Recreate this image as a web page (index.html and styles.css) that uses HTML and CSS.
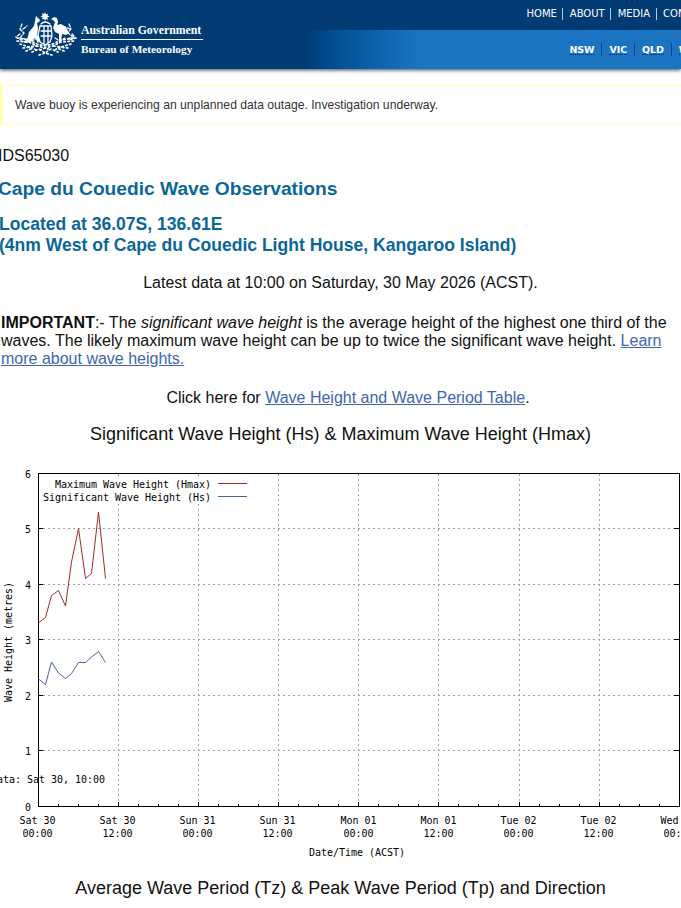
FILE: index.html
```html
<!DOCTYPE html>
<html lang="en">
<head>
<meta charset="utf-8">
<title>Cape du Couedic Wave Observations</title>
<link rel="stylesheet" href="styles.css">
</head>
<body>
<header class="masthead">
  <a class="brand">
    <svg class="crest" width="62" height="46" viewBox="0 0 62 46" fill="#fff" stroke="#fff" stroke-linecap="round">
      <path stroke="none" d="M30 0l1 2.200 2.300-.8-1 2.200 2.200 1-2.200 1 .8 2.200-2.200-.8L30 9l-1-2.200-2.300.8 1-2.200-2.200-1 2.200-1-.9-2.200 2.200.8z"/>
      <path stroke="none" d="M21 4l2 2 2 2-1 2-2 1 1 5-1 7 3 5-2 3-3-5-5 4-4 1-4-1 5-2 2-8 5-6 1-5z"/>
      <path stroke="none" d="M39 5l3 1 1 4-1 3 4-1 5 3 3 6-3 2-4-1-1 8-2-1v-7l-4-2-2-4 2-6-2-2-2-1z"/>
      <path fill="none" stroke-width="1.300" d="M25 14h11l1 10-2 6-5 3-5-3-2-7 2-9zM26 19h10M26 24h10M29 14v18M33 14v18M26 12q4-4 9 0"/>
      <path fill="none" stroke-width="1.300" stroke-dasharray="3 1.800" d="M7 12l-2 5 4 4-4 5 6 1M8 17l4-3M5 22l-4 3 5 3M54 12l2 5-3 4 5 4-6 2M55 17l-5-2M57 22l4 4-7 2M12 27l5 2 5-3M40 26l5 3 5-3"/>
      <path fill="none" stroke-width="1.700" stroke-dasharray="1.500 2.600" d="M2 26l12 2 8 4 8 2 8-2 8-4 13-2M2 29l12 1 8 4 8 2 8-2 8-4 13-1M5 32l9 3 8-1M56 32l-10 3-8-1M8 36l8-1 5 3M53 36l-9-1-4 3M17 40l7-3 6 4 6-4 7 3M24 43l6-2 7 2M11 39l7-3M49 39l-7-3M25 38l5-2 6 2"/>
    </svg>
    <span class="brand-text"><span class="gov">Australian Government</span><span class="bom">Bureau of Meteorology</span></span>
  </a>
  <div class="bars">
    <nav class="topnav"><a>HOME</a><a>ABOUT</a><a>MEDIA</a><a>CONTACTS</a></nav>
    <nav class="states"><a><abbr>NSW</abbr></a><a><abbr>VIC</abbr></a><a><abbr>QLD</abbr></a><a><abbr>WA</abbr></a></nav>
  </div>
</header>
<div class="alert">Wave buoy is experiencing an unplanned data outage. Investigation underway.</div>
<main>
  <p class="product">IDS65030</p>
  <h1>Cape du Couedic Wave Observations</h1>
  <h2>Located at 36.07S, 136.61E<br>(4nm West of Cape du Couedic Light House, Kangaroo Island)</h2>
  <p class="latest">Latest data at 10:00 on Saturday, 30 May 2026 (ACST).</p>
  <p class="important"><b>IMPORTANT</b>:- The <i>significant wave height</i> is the average height of the highest one third of the<br>waves. The likely maximum wave height can be up to twice the significant wave height. <a>Learn<br>more about wave heights.</a></p>
  <p class="table-link">Click here for <a>Wave Height and Wave Period Table</a>.</p>
  <h3>Significant Wave Height (Hs) &amp; Maximum Wave Height (Hmax)</h3>
  <svg class="chart" width="681" height="408" viewBox="0 460 681 408">
    <path class="grid" d="M118.500 806V474M198.500 806V474M278.500 806V474M358.500 806V474M438.500 806V474M519.500 806V474M599.500 806V474M38 750.500H679M38 695.500H679M38 639.500H679M38 584.500H679M38 528.500H679"/>
    <path class="key-bg" d="M42 477h207v25H42z"/>
    <path class="axis" d="M38.500 473.500H679.500V806.500H38.500zM38 750.500h5M38 695.500h5M38 639.500h5M38 584.500h5M38 528.500h5M679 750.500h-5M679 695.500h-5M679 639.500h-5M679 584.500h-5M679 528.500h-5M118.500 806v-4M198.500 806v-4M278.500 806v-4M358.500 806v-4M438.500 806v-4M519.500 806v-4M599.500 806v-4"/>
    <path class="axis" d="M58.500 806v-2M78.500 806v-2M98.500 806v-2M138.500 806v-2M158.500 806v-2M178.500 806v-2M218.500 806v-2M238.500 806v-2M258.500 806v-2M298.500 806v-2M318.500 806v-2M338.500 806v-2M378.500 806v-2M398.500 806v-2M418.500 806v-2M458.500 806v-2M478.500 806v-2M498.500 806v-2M539.500 806v-2M559.500 806v-2M579.500 806v-2M619.500 806v-2M639.500 806v-2M659.500 806v-2"/>
    <path class="hmax" d="M218 483.500H247M38.500 623L45.500 617.500 51.500 595.500 58.500 590.500 65.500 606 71.500 562 78.500 528.500 85.500 578.500 91.500 573.500 98.500 512 105.500 578.500"/>
    <path class="hs" d="M218 496.500H247M38.500 679L45.500 684.500 51.500 662 58.500 673 65.500 678.500 71.500 673.500 78.500 662.500H85.500L91.500 657 98.500 651.500 105.500 662.500"/>
    <text x="55" y="488" textLength="156">Maximum Wave Height (Hmax)</text>
    <text x="43" y="501" textLength="168">Significant Wave Height (Hs)</text>
    <g><text x="25" y="478">6</text><text x="25" y="533">5</text><text x="25" y="589">4</text><text x="25" y="644">3</text><text x="25" y="700">2</text><text x="25" y="755">1</text><text x="25" y="811">0</text></g>
    <text x="-39" y="783" textLength="144">Last data: Sat 30, 10:00</text>
    <text transform="translate(12 702) rotate(-90)" textLength="120">Wave Height (metres)</text>
    <g class="ticks">
      <text x="37.500" y="824">Sat 30</text><text x="37.500" y="837">00:00</text>
      <text x="117.500" y="824">Sat 30</text><text x="117.500" y="837">12:00</text>
      <text x="197.500" y="824">Sun 31</text><text x="197.500" y="837">00:00</text>
      <text x="277.500" y="824">Sun 31</text><text x="277.500" y="837">12:00</text>
      <text x="358.500" y="824">Mon 01</text><text x="358.500" y="837">00:00</text>
      <text x="438.500" y="824">Mon 01</text><text x="438.500" y="837">12:00</text>
      <text x="518.500" y="824">Tue 02</text><text x="518.500" y="837">00:00</text>
      <text x="598.500" y="824">Tue 02</text><text x="598.500" y="837">12:00</text>
      <text x="678.500" y="824">Wed 03</text><text x="678.500" y="837">00:00</text>
    </g>
    <text x="309" y="856" textLength="96">Date/Time (ACST)</text>
  </svg>
  <h3 class="period">Average Wave Period (Tz) &amp; Peak Wave Period (Tp) and Direction</h3>
</main>
</body>
</html>
```
FILE: styles.css
```css
body { margin: 0; width: 681px; height: 908px; overflow: hidden; background: #fff; color: #111; font: 16px/18px "Liberation Sans", Arial, sans-serif; }
p, h1, h2, h3 { margin: 0; }
.masthead { display: flex; height: 69px; background: #003b74; box-shadow: 0 1px 4px #345; overflow: visible; }
.brand { display: flex; flex: none; width: 305px; }
.crest { margin: 12px 0 0 15px; }
.brand-text { display: flex; flex-direction: column; margin: 22px 0 0 4px; color: #fff; font: bold 11.800px/17px "Liberation Serif", serif; white-space: nowrap; }
.gov { width: 122px; height: 17px; border-bottom: 1px solid #fff; }
.bom { margin-top: 1px; font-size: 11.300px; }
.bars { flex: 1; min-width: 0; overflow: hidden; }
.topnav, .states { display: flex; white-space: nowrap; color: #fff; font-family: "DejaVu Sans", Verdana, sans-serif; }
.topnav { height: 30px; padding: 8px 0 0 215px; box-sizing: border-box; font-size: 10px; line-height: 12px; }
.topnav a { height: 12px; padding: 0 5.500px 0 6.500px; border-right: 1px solid #b8cbdc; }
.states { height: 39px; padding: 13px 0 0 257.500px; box-sizing: border-box; background: linear-gradient(90deg, #003b74, #00488a 18px, #0c5fa8 65px, #1b74c2 115px); font-size: 9.500px; font-weight: bold; line-height: 13px; }
.states a { height: 13px; padding: 0 7px; border-right: 1px solid #0c4580; }
.states abbr { display: block; height: 11px; border-bottom: 1px dotted #062b62; letter-spacing: -.1px; }
.alert { margin-top: 16px; height: 40px; padding-left: 12px; box-sizing: border-box; border: solid #ffffb5; border-width: 1px 0 1px 3px; color: #333; font-size: 12.160px; line-height: 38px; }
.product { margin: 22px 0 0 -2px; }
h1 { margin: 13px 0 0 -2px; color: #0b6799; font-size: 19.200px; line-height: 22px; white-space: nowrap; }
h2 { margin: 14px 0 0 -1px; color: #0b6799; font-size: 17.560px; line-height: 21px; white-space: nowrap; }
.latest { margin-top: 18px; text-align: center; }
.important { margin: 22px 0 0 1px; white-space: nowrap; }
a { color: inherit; }
.important a, .table-link a { color: #4066ae; text-decoration: underline; }
.table-link { margin: 21px 0 0 15px; text-align: center; }
h3 { margin-top: 16px; font-size: 18px; font-weight: normal; line-height: 22px; text-align: center; }
.chart { display: block; margin-top: 15px; }
.chart text { font: 10px "DejaVu Sans Mono", monospace; fill: #000; }
.ticks { text-anchor: middle; }
.axis, .grid, .hmax, .hs { fill: none; stroke-width: 1; }
.axis { stroke: #000; shape-rendering: crispEdges; }
.grid { stroke: #a0a0a0; stroke-dasharray: 2 3; shape-rendering: crispEdges; }
.key-bg { fill: #fff; }
.hmax { stroke: #a02a2a; }
.hs { stroke: #4c609c; }
.period { margin-top: 9px; }
```
